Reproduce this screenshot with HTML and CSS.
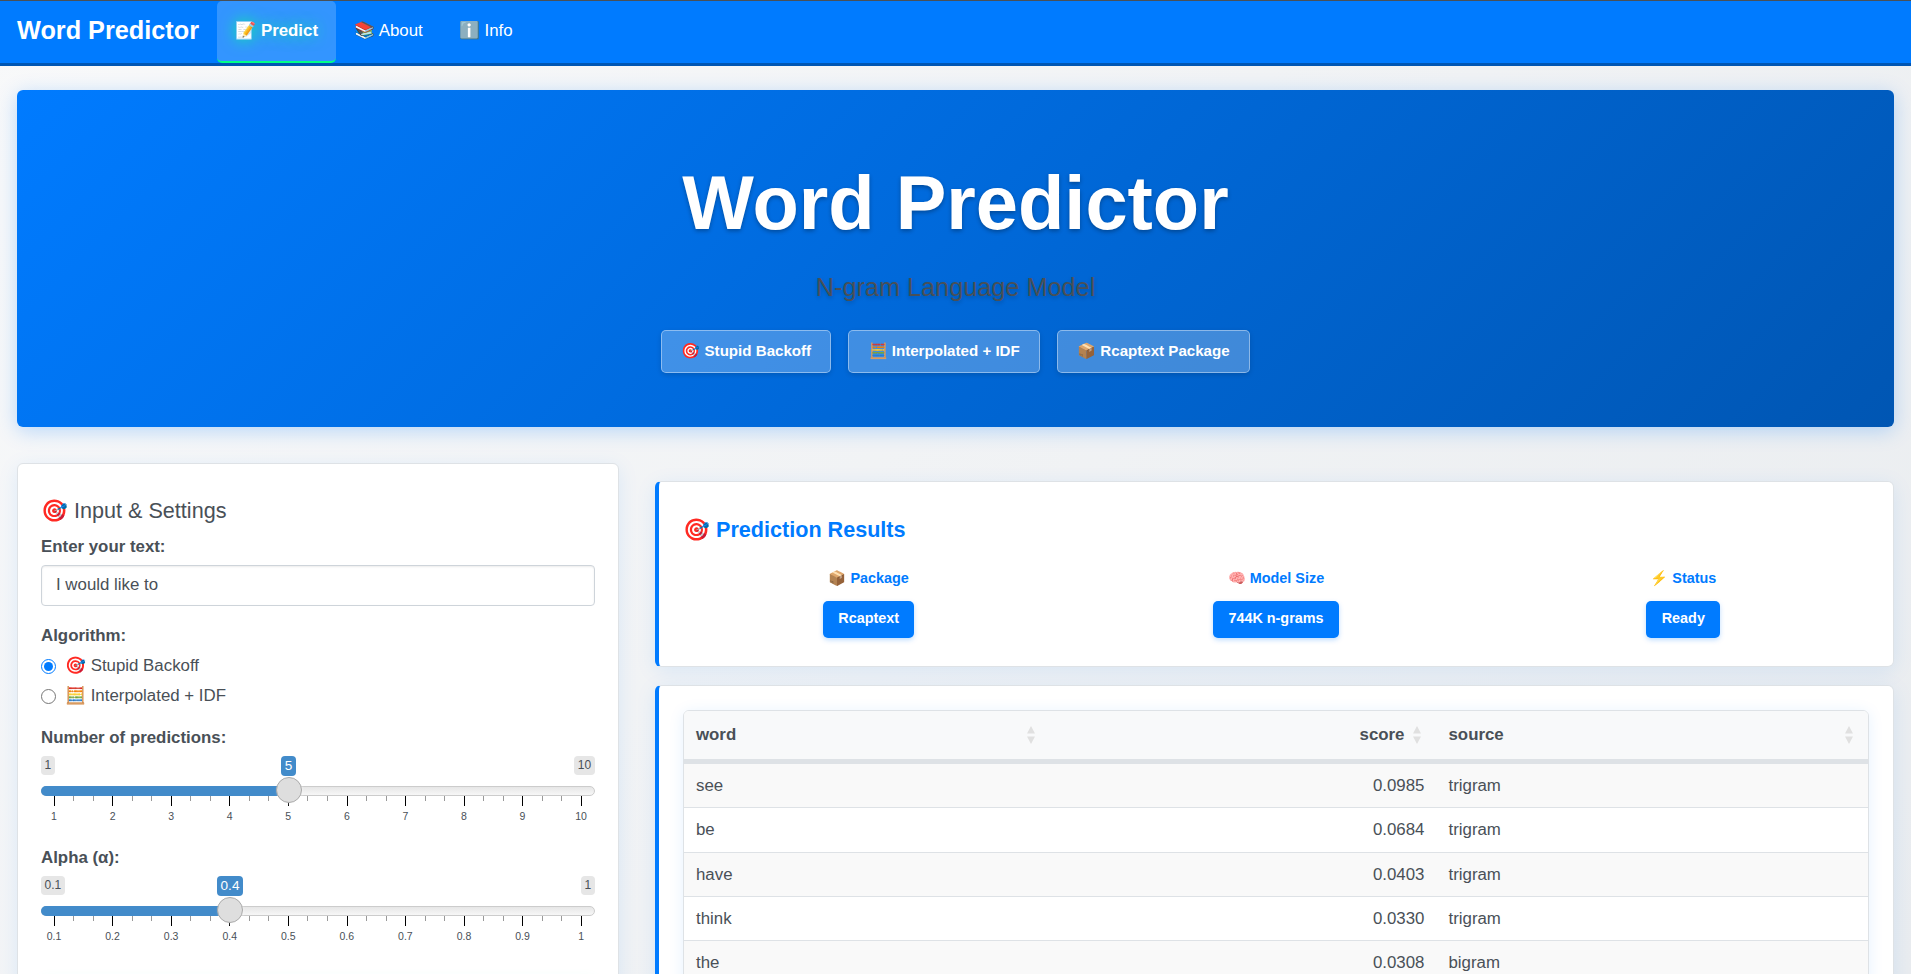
FILE: index.html
```html
<!DOCTYPE html>
<html lang="en">
<head>
<meta charset="utf-8">
<title>Word Predictor</title>
<link rel="stylesheet" href="styles.css">
</head>
<body>
<nav class="navbar">
  <a class="brand">Word Predictor</a>
  <a class="tab active">📝 Predict</a>
  <a class="tab">📚 About</a>
  <a class="tab">ℹ️ Info</a>
</nav>
<header class="hero">
  <h1 class="hero-title">Word Predictor</h1>
  <p class="hero-sub">N-gram Language Model</p>
  <div class="hero-badges">
    <span class="hero-badge">🎯 Stupid Backoff</span>
    <span class="hero-badge">🧮 Interpolated + IDF</span>
    <span class="hero-badge">📦 Rcaptext Package</span>
  </div>
</header>
<main class="layout">
  <section class="card settings">
    <h4 class="card-title">🎯 Input &amp; Settings</h4>
    <label class="label" for="phrase">Enter your text:</label>
    <input class="text-input" id="phrase" type="text" value="I would like to">
    <div class="label algo">Algorithm:</div>
    <label class="option"><input class="radio" type="radio" name="algo" checked><span>🎯 Stupid Backoff</span></label>
    <label class="option"><input class="radio" type="radio" name="algo"><span>🧮 Interpolated + IDF</span></label>
    <div class="label count">Number of predictions:</div>
    <div class="slider">
      <div class="ends"><span class="end">1</span><span class="end">10</span></div>
      <div class="track"><div class="fill" style="width: 247.6px"></div></div>
      <div class="pointer" style="left: 247.6px"><span class="value">5</span><span class="handle"></span></div>
      <svg class="ticks" width="554" height="10" shape-rendering="crispEdges"><path class="minor" d="M32.5 0v5M52 0v5M91 0v5M110.500 0v5M149.500 0v5M169 0v5M208 0v5M227.500 0v5M266.500 0v5M286.500 0v5M325.500 0v5M345 0v5M384 0v5M403.500 0v5M442.500 0v5M462 0v5M501 0v5M520.500 0v5"/><path class="major" d="M13 0v10M71.500 0v10M130 0v10M188.700 0v10M247.300 0v10M306 0v10M364.500 0v10M423 0v10M481.700 0v10M540.300 0v10"/></svg>
      <div class="scale"><span>1</span><span>2</span><span>3</span><span>4</span><span>5</span><span>6</span><span>7</span><span>8</span><span>9</span><span>10</span></div>
    </div>
    <div class="label">Alpha (α):</div>
    <div class="slider">
      <div class="ends"><span class="end">0.1</span><span class="end">1</span></div>
      <div class="track"><div class="fill" style="width: 189px"></div></div>
      <div class="pointer" style="left: 189px"><span class="value">0.4</span><span class="handle"></span></div>
      <svg class="ticks" width="554" height="10" shape-rendering="crispEdges"><path class="minor" d="M32.5 0v5M52 0v5M91 0v5M110.500 0v5M149.500 0v5M169 0v5M208 0v5M227.500 0v5M266.500 0v5M286.500 0v5M325.500 0v5M345 0v5M384 0v5M403.500 0v5M442.500 0v5M462 0v5M501 0v5M520.500 0v5"/><path class="major" d="M13 0v10M71.500 0v10M130 0v10M188.700 0v10M247.300 0v10M306 0v10M364.500 0v10M423 0v10M481.700 0v10M540.300 0v10"/></svg>
      <div class="scale"><span>0.1</span><span>0.2</span><span>0.3</span><span>0.4</span><span>0.5</span><span>0.6</span><span>0.7</span><span>0.8</span><span>0.9</span><span>1</span></div>
    </div>
    <div class="action"></div>
  </section>
  <div class="results">
    <section class="card accent summary">
      <h4 class="card-title blue">🎯 Prediction Results</h4>
      <div class="stats">
        <div class="stat"><div class="stat-label">📦 Package</div><span class="pill">Rcaptext</span></div>
        <div class="stat"><div class="stat-label">🧠 Model Size</div><span class="pill">744K n-grams</span></div>
        <div class="stat"><div class="stat-label">⚡ Status</div><span class="pill">Ready</span></div>
      </div>
    </section>
    <section class="card accent table-card">
      <div class="table">
        <div class="row head">
          <div class="cell">word<svg class="sort" width="8" height="18"><path d="M4 0l4 7.500H0zM0 10.500h8L4 18z"/></svg></div>
          <div class="cell num">score<svg class="sort" width="8" height="18"><path d="M4 0l4 7.500H0zM0 10.500h8L4 18z"/></svg></div>
          <div class="cell">source<svg class="sort" width="8" height="18"><path d="M4 0l4 7.500H0zM0 10.500h8L4 18z"/></svg></div>
        </div>
        <div class="row"><div class="cell">see</div><div class="cell num">0.0985</div><div class="cell">trigram</div></div>
        <div class="row"><div class="cell">be</div><div class="cell num">0.0684</div><div class="cell">trigram</div></div>
        <div class="row"><div class="cell">have</div><div class="cell num">0.0403</div><div class="cell">trigram</div></div>
        <div class="row"><div class="cell">think</div><div class="cell num">0.0330</div><div class="cell">trigram</div></div>
        <div class="row"><div class="cell">the</div><div class="cell num">0.0308</div><div class="cell">bigram</div></div>
      </div>
    </section>
  </div>
</main>
</body>
</html>
```
FILE: styles.css
```css
* { box-sizing: border-box; }
html { height: 100%; overflow: hidden; }
body {
  display: flex;
  flex-direction: column;
  margin: 0;
  height: 974px;
  overflow: hidden;
  font: 16.850px/25.5px "Liberation Sans", Arial, sans-serif;
  color: #495057;
  background: linear-gradient(135deg, #f8f9fa 0%, #e9ecef 100%);
}
h1, h4, p { margin: 0; }

.navbar {
  display: flex;
  flex: none;
  height: 66px;
  padding-left: 17px;
  background: #007bff;
  border-top: 1px solid #495057;
  border-bottom: 3px solid #0056b3;
  color: #fff;
}
.brand { margin-right: 18.200px; font-size: 25.280px; font-weight: 700; line-height: 59px; }
.tab { padding: 0 18px; line-height: 60px; border-bottom: 2px solid transparent; border-radius: 5px; }
.active {
  font-weight: 700;
  background: rgba(255, 255, 255, .2);
  border-bottom-color: #00ff88;
  text-shadow: 0 0 15px rgba(0, 255, 136, .8);
}

.hero {
  flex: none;
  height: 337px;
  margin: 24px 17px 36px;
  padding-top: 66.500px;
  text-align: center;
  color: #fff;
  border-radius: 6px;
  background: linear-gradient(135deg, #007bff 0%, #0056b3 100%);
  box-shadow: 0 4px 20px rgba(0, 123, 255, .25);
}
.hero-title { font-size: 75.850px; line-height: 92px; text-shadow: 0 2px 4px rgba(0, 0, 0, .3); }
.hero-sub { margin-top: 19.500px; font-size: 25.280px; line-height: 38px; color: #495057; text-shadow: 0 2px 4px rgba(0, 0, 0, .2); }
.hero-badges { display: flex; justify-content: center; gap: 17px; margin-top: 24px; }
.hero-badge {
  height: 43px;
  padding: 0 19.200px;
  font-size: 15.120px;
  font-weight: 700;
  line-height: 40px;
  border: 1px solid rgba(255, 255, 255, .4);
  border-radius: 5px;
  background: rgba(255, 255, 255, .25);
  box-shadow: 0 2px 5px rgba(0, 0, 0, .15);
}

.layout { display: grid; flex: 1; min-height: 0; overflow: clip; overflow-clip-margin: 40px; grid-template-columns: 601.7px 1fr; gap: 36.300px; align-items: start; padding: 0 17px; }
.card {
  background: #fff;
  border: 1px solid #dee2e6;
  border-radius: 6px;
  box-shadow: 0 4px 20px rgba(0, 123, 255, .1);
}
.card-title { font-size: 21.600px; font-weight: 400; line-height: 25.5px; }
.blue { color: #007bff; font-weight: 700; }
.settings { height: 560px; padding: 34px 23px 0; }

.label { display: block; font-weight: 700; }
.card-title + .label { margin-top: 10.500px; }
.text-input {
  display: block;
  width: 100%;
  height: 41px;
  margin: 5px 0 16.500px;
  padding: 0 14px 1px;
  font: inherit;
  color: inherit;
  background: #fff;
  border: 1px solid #ced4da;
  border-radius: 4px;
  box-shadow: inset 0 1px 2px rgba(0, 0, 0, .08);
}
.algo { padding-top: 1px; margin-bottom: 2px; }
.option { display: flex; height: 30px; line-height: 30px; }
.radio { width: 15px; height: 15px; margin: 8px 9px 0 0; accent-color: #007bff; }
.count { margin-top: 14px; }

.slider { position: relative; height: 89px; padding-top: 5.500px; margin-bottom: 6px; }
.ends { display: flex; justify-content: space-between; }
.end { height: 19px; padding: 0 3.500px; font-size: 12px; line-height: 19px; background: #e6e6e6; border-radius: 4px; }
.track { height: 10px; margin-top: 11px; border: 1px solid #ccc; border-radius: 8px; background: linear-gradient(#dedede -50%, #fff 150%); }
.fill { height: 10px; margin: -1px; background: #428bca; border-radius: 8px 0 0 8px; }
.pointer { position: absolute; top: 5.500px; display: flex; flex-direction: column; align-items: center; transform: translateX(-50%); }
.value { height: 20px; padding: 0 3.500px; font-size: 13.600px; line-height: 20px; color: #fff; background: #428bca; border-radius: 4px; }
.handle { width: 26px; height: 26px; margin-top: 1px; border: 1px solid #aaa; border-radius: 50%; background: #dedede; box-shadow: 1px 1px 3px rgba(255, 255, 255, .3); }
.ticks { display: block; }
.minor { stroke: #999; }
.major { stroke: #000; }
.scale { display: flex; justify-content: space-between; padding: 3px 13.500px 0 13px; font-size: 10.500px; line-height: 14px; }
.scale span { display: flex; justify-content: center; width: 0; }
.action { height: 20px; margin-top: 18px; border-radius: 6px; box-shadow: 0 4px 15px rgba(0, 255, 200, .12); }

.results { display: grid; gap: 18.500px; padding-top: 18px; }
.accent { border-left: 4px solid #007bff; }
.summary { height: 185.500px; padding: 35px 24px 0; }
.stats { display: grid; grid-template-columns: repeat(3, 1fr); margin: 24px -18px 0; text-align: center; }
.stat-label { font-size: 14.400px; font-weight: 700; line-height: 22px; color: #007bff; }
.pill {
  display: inline-block;
  height: 37px;
  margin-top: 12px;
  padding: 0 15.400px;
  font-size: 14.400px;
  font-weight: 700;
  line-height: 35px;
  color: #fff;
  background: #007bff;
  border-radius: 5px;
  box-shadow: 0 2px 5px rgba(0, 123, 255, .25);
}
.table-card { height: 330px; padding: 24px; }
.table { height: 300px; overflow: hidden; border: 1px solid #dee2e6; border-radius: 6px; box-shadow: 0 2px 15px rgba(0, 123, 255, .1); }
.row { display: grid; grid-template-columns: 366.500px 386px 1fr; height: 44.250px; border-bottom: 1px solid #dee2e6; line-height: 43px; }
.row:nth-child(even) { background: #f9f9f9; }
.head { height: 53px; border-bottom-width: 5px; line-height: 47px; font-weight: 700; background: #f8f9fa; }
.cell { display: flex; justify-content: space-between; padding: 0 12px; }
.num { justify-content: flex-end; }
.sort { margin: 15px 3px 0 9px; fill: #e0e0e0; }
```
